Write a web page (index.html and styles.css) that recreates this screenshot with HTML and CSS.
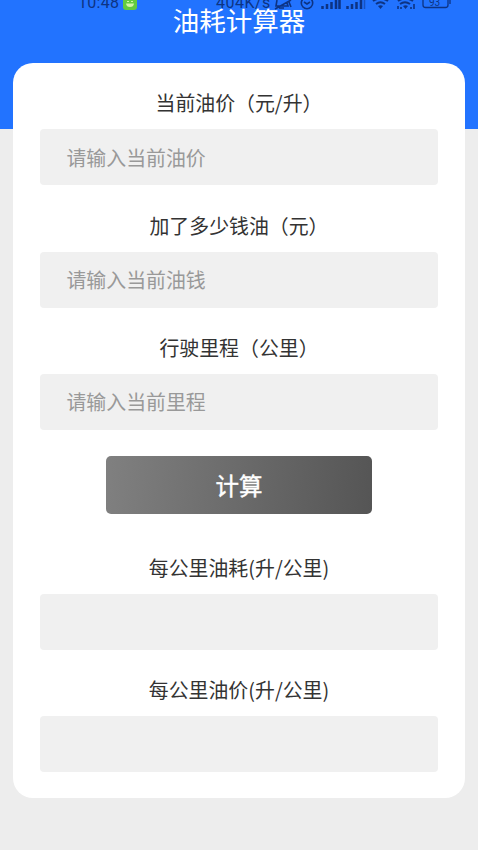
FILE: index.html
```
<!DOCTYPE html>
<html lang="zh-CN">
<head>
<meta charset="utf-8">
<title>油耗计算器</title>
<link rel="stylesheet" href="styles.css">
</head>
<body>
<header class="header">
  <div class="status">
    <span class="time">10:48</span>
    <svg class="app" width="14" height="10" viewBox="0 0 14 10"><path d="M0 0h14v7q0 3-3 3H3Q0 10 0 7z" fill="#62cc3e"/><path d="M3 3.5h8q-.5 3.5-4 3.5T3 3.5z" fill="#d2f5a5"/><path d="M4 1.5h2M8 1.5h2" stroke="#d2f5a5"/></svg>
    <span class="speed">404K/s</span>
    <svg class="icons" width="180" height="11" viewBox="272 0 180 11" fill="none" stroke="currentColor" stroke-width="1.6">
      <path d="M277 0l-1 6h12l-1-3M279 8h5M275 9L291 0M289 2l2 5"/>
      <circle cx="307" cy="3" r="5.7"/><path d="M304 2l3 2 3-2"/>
      <path stroke-width="2.5" d="M322.500 9V6M327 9V4M331.500 9V2M336 9V0M339.500 9V0"/>
      <path stroke-width="2.500" d="M347.500 9V6M352 9V4M356.500 9V2M361 9V0"/><path stroke-width="1.500" opacity=".5" d="M364.500 9V0"/>
      <path stroke-width="2" d="M373 1q7-5 15 0M376 4q4.500-3.500 9 0"/><path d="M378 6q2.500-1.500 5 0l-2.500 3z" fill="currentColor" stroke="none"/>
      <path stroke-width="2" d="M398 1q7-5 15 0M400 4q5-3.500 10 0"/><path d="M403 6q2.500-1.500 5 0l-2.500 3z" fill="currentColor" stroke="none"/><path d="M398 9V6M401 9V7M411 9V7M414 9V4"/>
      <path stroke-width="1.300" d="M423 0v5q0 2.500 2.500 2.500h20q2.500 0 2.500-2.500V0M450 0v4"/>
      <text class="battery" x="429" y="6">93</text>
    </svg>
  </div>
  <h1 class="title">油耗计算器</h1>
</header>
<main class="card">
  <label class="label" for="price">当前油价（元/升）</label>
  <input class="field" id="price" placeholder="请输入当前油价">
  <label class="label" for="money">加了多少钱油（元）</label>
  <input class="field" id="money" placeholder="请输入当前油钱">
  <label class="label" for="distance">行驶里程（公里）</label>
  <input class="field" id="distance" placeholder="请输入当前里程">
  <button class="submit" type="button">计算</button>
  <label class="label" for="fuel">每公里油耗(升/公里)</label>
  <input class="field" id="fuel" readonly>
  <label class="label" for="cost">每公里油价(升/公里)</label>
  <input class="field" id="cost" readonly>
</main>
</body>
</html>
```
FILE: styles.css
```
* { box-sizing: border-box; }
body {
  margin: 0;
  height: 850px;
  overflow: hidden;
  background: #ededed;
  color: #333;
  font-family: "Noto Sans CJK SC", sans-serif;
}
.header {
  position: relative;
  height: 129.4px;
  background: #2273ff;
}
.status {
  position: absolute;
  inset: 0 0 auto;
  height: 12px;
  overflow: hidden;
  color: #0d3383;
  font: 16px/16px Roboto, sans-serif;
}
.status > * { position: absolute; top: 0; }
.status .time { left: 78px; top: -5px; letter-spacing: .3px; }
.status .app { left: 123px; }
.status .speed { left: 216px; top: -5px; letter-spacing: .5px; }
.status .icons { left: 272px; }
.battery { font: 10px Roboto, sans-serif; fill: currentColor; stroke: none; }
.title {
  position: relative;
  margin: 0;
  text-align: center;
  color: #fff;
  font-size: 26.5px;
  line-height: 40px;
  font-weight: 400;
}
.card {
  position: relative;
  display: flex;
  flex-direction: column;
  margin: -66.200px 13.300px 0;
  height: 735px;
  padding: 13.200px 26.600px 0;
  border-radius: 20px;
  background: #fff;
}
.label {
  height: 53px;
  line-height: 53px;
  text-align: center;
  font-size: 19.9px;
}
.field {
  width: 100%;
  height: 56px;
  margin: 0 0 13.200px;
  padding: 0 26.600px;
  border: 0;
  border-radius: 4px;
  outline: 0;
  background: #f0f0f0;
  color: #333;
  font: 19.900px "Noto Sans CJK SC", sans-serif;
}
.field::placeholder { color: #999; opacity: 1; }
.submit {
  align-self: center;
  width: 266px;
  height: 58px;
  margin: 13.400px 0 26.500px;
  padding: 0 0 1px;
  border: 0;
  border-radius: 5px;
  background: linear-gradient(95deg, #808080, #555);
  color: #fff;
  font: 400 23.500px "Noto Sans CJK SC", sans-serif;
  -webkit-text-stroke: .4px #fff;
}
```
